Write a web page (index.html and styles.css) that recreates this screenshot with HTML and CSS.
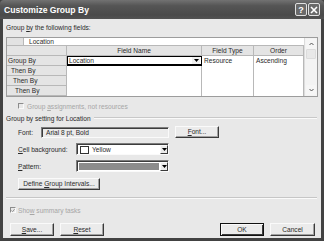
FILE: index.html
```html
<!DOCTYPE html>
<html lang="en">
<head>
  <meta charset="UTF-8" />
  <title>Customize Group By</title>
  <link rel="stylesheet" href="styles.css">
</head>
<body>
  <div class="window">
    <div class="titlebar">
      <span class="title">Customize Group By</span>
      <div class="tb-btns">
        <span class="tb-btn">?</span>
        <span class="tb-btn">
          <svg width="8" height="8" viewBox="0 0 8 8"><path d="M1 1L7 7M7 1L1 7" stroke="#fff" stroke-width="1.6"/></svg>
        </span>
      </div>
    </div>

    <div class="client">
      <div class="caption">Group <u>b</u>y the following fields:</div>

      <div class="grid">
        <div class="toprow">
          <div class="corner"></div>
          <div class="loc">Location</div>
        </div>
        <div class="scroll">
          <div class="sb-btn">
            <svg width="5" height="4" viewBox="0 0 5 4"><path d="M0.5 3L2.5 1L4.5 3" stroke="#555" fill="none"/></svg>
          </div>
          <div class="sb-thumb"></div>
          <div class="sb-track"></div>
          <div class="sb-btn">
            <svg width="5" height="4" viewBox="0 0 5 4"><path d="M0.5 1L2.5 3L4.5 1" stroke="#555" fill="none"/></svg>
          </div>
        </div>

        <div class="hdr"></div>
        <div class="hdr">Field Name</div>
        <div class="hdr">Field Type</div>
        <div class="hdr">Order</div>

        <div class="rowhdr">Group By</div>
        <div class="cell active">
          <span>Location</span>
          <span class="mini-arrow">
            <svg width="5" height="3" viewBox="0 0 5 3"><path d="M0 0H5L2.5 3Z" fill="#000"/></svg>
          </span>
        </div>
        <div class="cell">Resource</div>
        <div class="cell">Ascending</div>

        <div class="rowhdr ind1">Then By</div>
        <div class="cell"></div>
        <div class="cell"></div>
        <div class="cell"></div>

        <div class="rowhdr ind2">Then By</div>
        <div class="cell"></div>
        <div class="cell"></div>
        <div class="cell"></div>

        <div class="rowhdr ind3">Then By</div>
        <div class="cell"></div>
        <div class="cell"></div>
        <div class="cell"></div>
      </div>

      <div class="check-row disabled first-check">
        <span class="checkbox"></span>
        <span>Group <u>a</u>ssignments, not resources</span>
      </div>

      <div class="section">
        <span>Group by setting for Location</span>
        <span class="section-line"></span>
      </div>

      <div class="field-row font-row">
        <span class="flabel">Font:</span>
        <div class="textbox">Arial 8 pt, Bold</div>
        <button class="btn font-btn"><u>F</u>ont...</button>
      </div>

      <div class="field-row">
        <span class="flabel wide"><u>C</u>ell background:</span>
        <div class="combo">
          <div class="combo-value">
            <span class="swatch"></span>
            <span>Yellow</span>
          </div>
          <span class="combo-arrow">
            <svg width="5" height="3" viewBox="0 0 5 3"><path d="M0 0H5L2.5 3Z" fill="#000"/></svg>
          </span>
        </div>
      </div>

      <div class="field-row">
        <span class="flabel wide"><u>P</u>attern:</span>
        <div class="combo">
          <div class="combo-value pattern"></div>
          <span class="combo-arrow">
            <svg width="5" height="3" viewBox="0 0 5 3"><path d="M0 0H5L2.5 3Z" fill="#000"/></svg>
          </span>
        </div>
      </div>

      <button class="btn intervals">Define <u>G</u>roup Intervals...</button>

      <div class="separator"></div>

      <div class="check-row disabled summary">
        <span class="checkbox">
          <svg width="5" height="5" viewBox="0 0 5 5"><path d="M0.5 2.5L2 4L4.5 0.8" stroke="#8a8a8a" stroke-width="1.1" fill="none"/></svg>
        </span>
        <span>Sho<u>w</u> summary tasks</span>
      </div>

      <div class="footer">
        <div class="footer-left">
          <button class="btn"><u>S</u>ave...</button>
          <button class="btn"><u>R</u>eset</button>
        </div>
        <div class="footer-right">
          <button class="btn default">OK</button>
          <button class="btn">Cancel</button>
        </div>
      </div>
    </div>
  </div>
</body>
</html>
```

FILE: styles.css
```css
:root {
  --dialog-bg: #e8e8e8;
  --frame: #424242;
  --grid-line: #b8b8b8;
  --text: #2a2a2a;
  --disabled: #a6a6a6;
}
* {
  box-sizing: border-box;
}
body {
  margin: 0;
  background: #fff;
  font-family: 'Liberation Sans', Arial, sans-serif;
  font-size: 6.6px;
  color: var(--text);
}
u {
  text-decoration-thickness: 0.5px;
  text-underline-offset: 1px;
}
.window {
  width: 324px;
  height: 241px;
  background: var(--frame);
  padding: 0 3px 3px 3px;
  display: flex;
  flex-direction: column;
}
.titlebar {
  height: 19px;
  margin: 0 -3px;
  padding: 0 4px 0 4px;
  display: flex;
  align-items: center;
  justify-content: space-between;
  background: linear-gradient(#727272, #555 30%, #4a4a4a 80%, #535353);
  border-radius: 4px 4px 0 0;
}
.title {
  color: #fff;
  font-size: 8.6px;
  font-weight: bold;
  padding-top: 1px;
}
.tb-btns {
  display: flex;
  gap: 1px;
}
.tb-btn {
  width: 12px;
  height: 13px;
  border: 1px solid #e0e0e0;
  border-radius: 2px;
  background: #6a6a6a;
  color: #fff;
  font-size: 9px;
  font-weight: bold;
  display: flex;
  align-items: center;
  justify-content: center;
}
.client {
  flex: 1;
  background: var(--dialog-bg);
  padding: 5px 3px 0 3px;
  display: flex;
  flex-direction: column;
}
.caption {
  height: 8px;
  line-height: 8px;
}
.grid {
  margin-top: 5px;
  display: grid;
  grid-template-columns: 60px 135px 52px 50px 13px;
  grid-template-rows: 8px 10px 10px 10px 10px 10px;
  border: 1px solid #9c9c9c;
  background: #fff;
}
.toprow {
  grid-column: 1 / 5;
  display: flex;
  border-bottom: 1px solid var(--grid-line);
}
.corner {
  width: 17px;
  background: #e2e2e2;
  border-right: 1px solid var(--grid-line);
}
.loc {
  padding-left: 5px;
  line-height: 7px;
}
.scroll {
  grid-column: 5;
  grid-row: 1 / 7;
  background: #f3f3f3;
  border-left: 1px solid #dcdcdc;
  display: flex;
  flex-direction: column;
  padding: 1px;
}
.sb-btn {
  height: 10px;
  display: flex;
  align-items: center;
  justify-content: center;
  background: #f6f6f6;
  border-radius: 1px;
}
.sb-thumb {
  height: 10px;
  background: #e8e8e8;
  border: 1px solid #dcdcdc;
  border-radius: 1px;
}
.sb-track {
  flex: 1;
}
.hdr {
  background: #e4e4e4;
  border-right: 1px solid var(--grid-line);
  border-bottom: 1px solid var(--grid-line);
  text-align: center;
  line-height: 9px;
}
.rowhdr {
  background: #e4e4e4;
  border-right: 1px solid var(--grid-line);
  border-bottom: 1px solid var(--grid-line);
  line-height: 9px;
  padding-left: 1px;
}
.rowhdr.ind1 {
  padding-left: 4px;
}
.rowhdr.ind2 {
  padding-left: 6px;
}
.rowhdr.ind3 {
  padding-left: 8px;
}
.cell {
  border-right: 1px solid var(--grid-line);
  line-height: 9px;
  padding-left: 2px;
}
.cell.active {
  border: 1px solid #000;
  border-bottom-width: 2px;
  display: flex;
  justify-content: space-between;
  align-items: center;
  padding-left: 1px;
  line-height: 7px;
}
.mini-arrow {
  width: 8px;
  height: 7px;
  margin-right: 1px;
  display: flex;
  align-items: center;
  justify-content: center;
  background: #f0f0f0;
}
.check-row {
  height: 8px;
  display: flex;
  align-items: center;
  gap: 3px;
}
.check-row.disabled {
  color: var(--disabled);
}
.first-check {
  margin-top: 5px;
  padding-left: 12px;
}
.checkbox {
  width: 6px;
  height: 6px;
  border: 1px solid;
  border-color: #8c8c8c #fafafa #fafafa #8c8c8c;
  background: var(--dialog-bg);
  display: flex;
  align-items: center;
  justify-content: center;
}
.section {
  margin-top: 4px;
  height: 8px;
  display: flex;
  align-items: center;
  gap: 3px;
  padding-right: 1px;
}
.section-line {
  flex: 1;
  height: 2px;
  border-top: 1px solid #c8c8c8;
  border-bottom: 1px solid #fafafa;
  margin-top: -1px;
}
.field-row {
  display: flex;
  align-items: center;
  padding-left: 12px;
  margin-top: 5px;
  height: 12px;
}
.font-row {
  margin-top: 4px;
}
.flabel {
  width: 23px;
}
.flabel.wide {
  width: 58px;
}
.textbox {
  width: 128px;
  height: 11px;
  line-height: 9px;
  padding-left: 4px;
  border: 1px solid;
  border-color: #7c7c7c #fafafa #fafafa #7c7c7c;
  box-shadow: inset 1px 1px 0 #3c3c3c;
  background: #ebebeb;
}
.btn {
  font-family: inherit;
  font-size: 6.6px;
  color: var(--text);
  height: 12px;
  padding: 0;
  border: 1px solid;
  border-color: #fafafa #3a3a3a #3a3a3a #fafafa;
  box-shadow: inset -1px -1px 0 #a2a2a2;
  border-radius: 0;
  background: #ebebeb;
  line-height: 10px;
}
.font-btn {
  width: 44px;
  margin-left: 6px;
}
.combo {
  width: 93px;
  height: 12px;
  border: 1px solid;
  border-color: #7c7c7c #fafafa #fafafa #7c7c7c;
  box-shadow: inset 1px 1px 0 #3c3c3c;
  background: #fff;
  display: flex;
  padding: 1px 0 0 1px;
}
.combo-value {
  flex: 1;
  display: flex;
  align-items: center;
  gap: 3px;
  padding-left: 2px;
}
.combo-value.pattern {
  background: #8c8c8c;
  margin: 1px;
}
.swatch {
  width: 9px;
  height: 8px;
  border: 1px solid #333;
  background: #fff;
}
.combo-arrow {
  width: 8px;
  display: flex;
  align-items: center;
  justify-content: center;
  background: #ebebeb;
  border: 1px solid;
  border-color: #fafafa #3a3a3a #3a3a3a #fafafa;
}
.intervals {
  align-self: flex-start;
  width: 82px;
  margin-top: 6px;
  margin-left: 12px;
}
.separator {
  margin-top: 7px;
  height: 2px;
  border-top: 1px solid #c6c6c6;
  border-bottom: 1px solid #fafafa;
  margin-right: 1px;
}
.summary {
  margin-top: 7px;
  padding-left: 4px;
  gap: 2px;
}
.footer {
  margin-top: 9px;
  display: flex;
  justify-content: space-between;
  padding: 0 3px 0 4px;
}
.footer-left, .footer-right {
  display: flex;
  gap: 6px;
}
.footer .btn {
  width: 44px;
  height: 13px;
}
.footer-right .btn:last-child {
  width: 45px;
}
.btn.default {
  border: 1px solid #111;
  box-shadow: inset 1px 1px 0 #fafafa, inset -1px -1px 0 #3a3a3a;
}
```
